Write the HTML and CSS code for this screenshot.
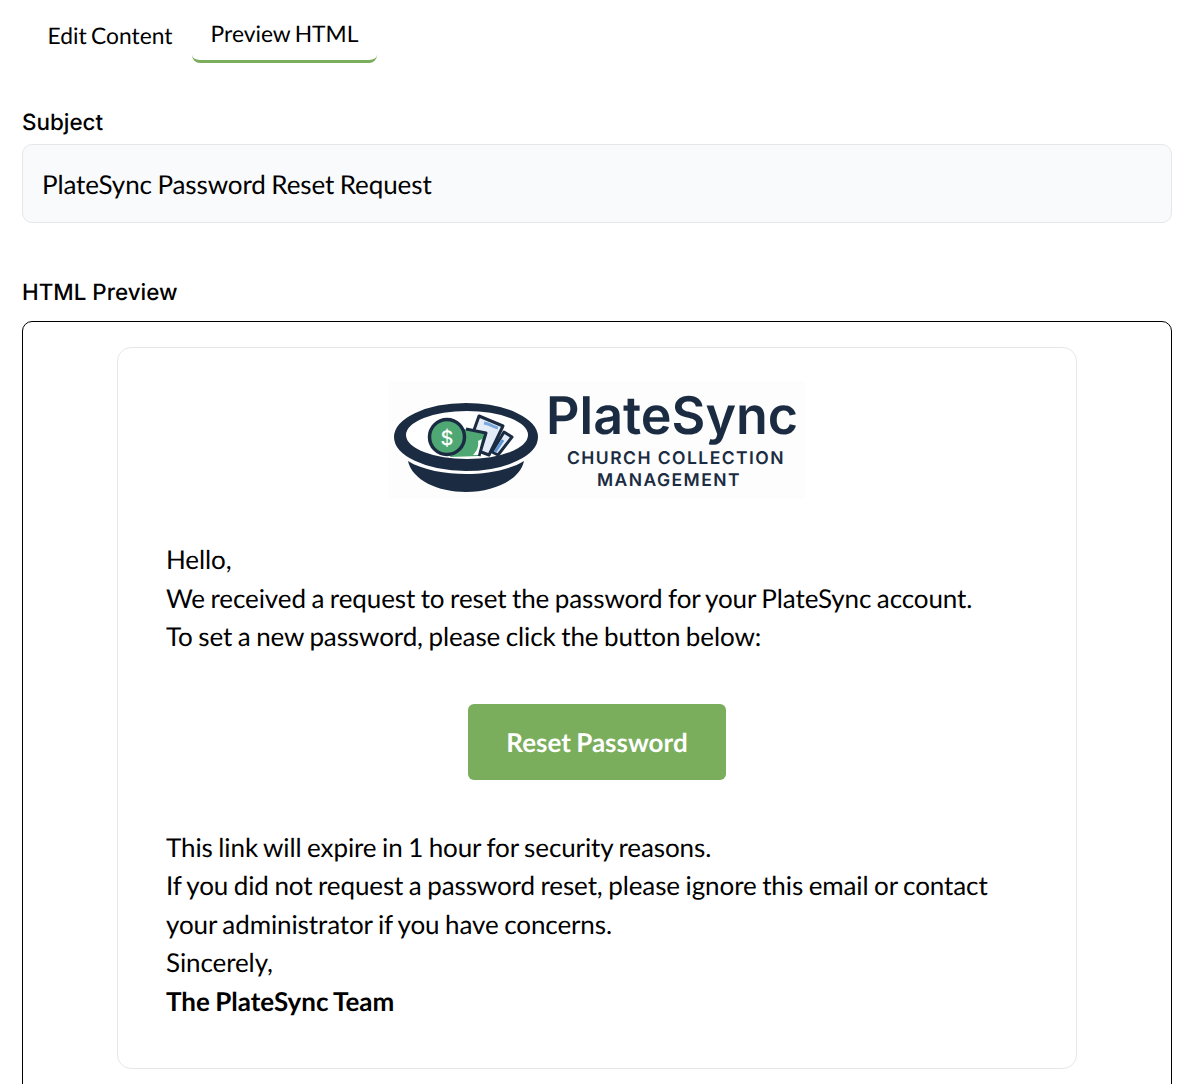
FILE: index.html
```html
<!DOCTYPE html>
<html lang="en">

<head>
    <meta charset="UTF-8">
    <meta name="viewport" content="width=device-width, initial-scale=1.0">
    <title>Preview HTML</title>
    <link rel="stylesheet" href="styles.css">
</head>

<body>
    <div class="tabs">
        <button class="tab">Edit Content</button>
        <button class="tab tab-active">Preview HTML</button>
    </div>

    <div class="field">
        <div class="field-label">Subject</div>
        <div class="subject-box">PlateSync Password Reset Request</div>
    </div>

    <div class="field field-preview">
        <div class="field-label label-preview">HTML Preview</div>
        <div class="preview-frame">
            <div class="email-card">
                <div class="logo">
                    <svg class="logo-svg" width="418" height="118" viewBox="0 0 418 118">
                        <rect width="418" height="118" fill="#fdfdfd" />
                        <!-- bowl base -->
                        <path d="M20 80 C34 89 58 93 78 93 C98 93 122 89 136 80 C132 99 106 111 78 111 C50 111 24 99 20 80 Z" fill="#1b2c42" />
                        <!-- rim -->
                        <ellipse cx="78" cy="56" rx="73" ry="35" fill="#1b2c42" stroke="#fff" stroke-width="2" />
                        <ellipse cx="79" cy="54" rx="61" ry="24" fill="#fff" />
                        <!-- back notes -->
                        <path d="M91 35 L115 45 L101 74 L80 66 Z" fill="#e4edf7" stroke="#1b2c42" stroke-width="3" stroke-linejoin="round" />
                        <path d="M96 42 C102 43 106 46 110 47" fill="none" stroke="#7aa8dc" stroke-width="3" />
                        <path d="M116 51 L124 56 L110 74 L104 71 Z" fill="#e4edf7" stroke="#1b2c42" stroke-width="3" stroke-linejoin="round" />
                        <path d="M115 59 L107 71" fill="none" stroke="#5f96d6" stroke-width="3" />
                        <!-- green note -->
                        <path d="M70 47 L97 52 L91 75 L62 76 Z" fill="#4fa873" />
                        <path d="M78 48 L98 52 L91 75" fill="none" stroke="#1b2c42" stroke-width="3" stroke-linejoin="round" />
                        <path d="M90 60 C91 65 89 70 85 74 L90 74 L94 58 Z" fill="#fff" />
                        <!-- coin -->
                        <circle cx="59" cy="56" r="17.5" fill="#4fa873" stroke="#1b2c42" stroke-width="3.5" />
                        <text x="59" y="64" class="logo-coin" text-anchor="middle">$</text>
                        <!-- wordmark -->
                        <text x="158" y="53" class="logo-name">PlateSync</text>
                        <text x="179" y="83" class="logo-sub">CHURCH COLLECTION</text>
                        <text x="209" y="105" class="logo-sub">MANAGEMENT</text>
                    </svg>
                </div>

                <p class="email-text">Hello,<br>We received a request to reset the password for your PlateSync account.<br>To set a new password, please click the button below:</p>

                <div class="email-action">
                    <a class="reset-btn">Reset Password</a>
                </div>

                <p class="email-text">This link will expire in 1 hour for security reasons.<br>If you did not request a password reset, please ignore this email or contact your administrator if you have concerns.<br>Sincerely,<br><strong class="email-sign">The PlateSync Team</strong></p>
            </div>
        </div>
    </div>
</body>

</html>
```

FILE: styles.css
```css
html,
body {
    height: 1084px;
    overflow: hidden;
}

body {
    margin: 0;
    padding: 0 30px 0 22px;
    font-family: Lato, sans-serif;
    background-color: #fff;
    color: #000;
    text-rendering: geometricPrecision;
    letter-spacing: -0.1px;
    word-spacing: -1px;
}

.tabs {
    display: flex;
    align-items: flex-start;
    height: 63px;
    padding-left: 6px;
}

.tab {
    border: none;
    background: none;
    padding: 0;
    font-family: Lato, sans-serif;
    font-size: 22.8px;
    color: #000;
    width: 164px;
    height: 70px;
    white-space: nowrap;
    text-rendering: geometricPrecision;
    letter-spacing: 0;
    word-spacing: -1.5px;
}

.tab-active {
    width: 185px;
    height: 63px;
    padding-top: 6px;
    border-bottom: 3px solid #7aad5c;
    border-radius: 0 0 8px 8px;
}

.field {
    margin-top: 46px;
}

.field-preview {
    margin-top: 56px;
}

.field-label {
    font-family: Inter, sans-serif;
    font-weight: 500;
    font-size: 22.4px;
    line-height: 28px;
    margin-bottom: 7px;
    letter-spacing: 0;
    word-spacing: 0;
}

.label-preview {
    margin-bottom: 14px;
}

.subject-box {
    box-sizing: border-box;
    height: 79px;
    padding: 0 20px 0 19px;
    display: flex;
    align-items: center;
    font-size: 26px;
    background-color: #f9fafb;
    border: 1px solid #e5e7eb;
    border-radius: 10px;
}

.preview-frame {
    box-sizing: border-box;
    height: 900px;
    padding: 25px 94px;
    border: 1px solid #000;
    border-radius: 10px;
}

.email-card {
    box-sizing: border-box;
    height: 722px;
    padding: 33px 48px;
    border: 1px solid #e5e7eb;
    border-radius: 14px;
}

.logo {
    display: flex;
    justify-content: center;
    margin-bottom: 41px;
}

.logo-svg {
    display: block;
}

.logo-coin {
    font-family: Inter, sans-serif;
    font-size: 20px;
    font-weight: 500;
    fill: #fff;
}

.logo-name {
    font-family: Inter, sans-serif;
    font-size: 52px;
    font-weight: 600;
    fill: #1b2c42;
    letter-spacing: 0;
}

.logo-sub {
    font-family: Inter, sans-serif;
    font-size: 17.5px;
    font-weight: 600;
    fill: #1b2c42;
    letter-spacing: 1.45px;
    word-spacing: 0;
}

.email-text {
    margin: 0;
    font-size: 26px;
    line-height: 38.5px;
}

.email-sign {
    letter-spacing: 0;
}

.email-action {
    display: flex;
    justify-content: center;
    margin: 48px 0;
}

.reset-btn {
    box-sizing: border-box;
    width: 258px;
    height: 76px;
    display: flex;
    align-items: center;
    justify-content: center;
    font-size: 26px;
    font-weight: 700;
    letter-spacing: 0;
    color: #fff;
    background-color: #7aad5c;
    border-radius: 6px;
}
```
